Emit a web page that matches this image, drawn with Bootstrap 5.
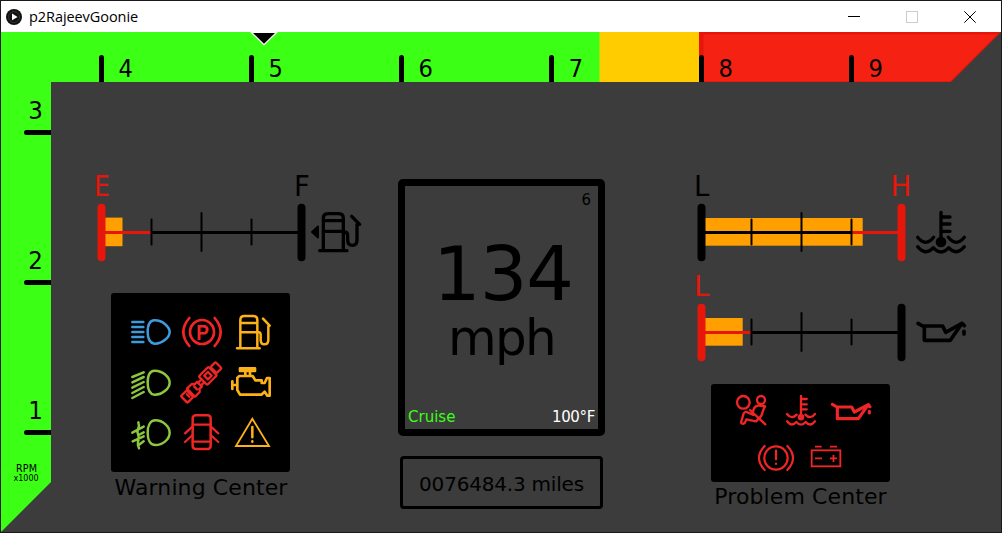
<!DOCTYPE html>
<html lang="en">
<head>
<meta charset="utf-8">
<title>p2RajeevGoonie</title>
<link rel="stylesheet" href="https://cdn.jsdelivr.net/npm/bootstrap@5.3.0/dist/css/bootstrap.min.css">
<style>
  body { background:#3c3c3c; font-family:"DejaVu Sans",sans-serif; color:#000; overflow:hidden; }
  svg { display:block; flex:none; }
  .app-window { width:1002px; height:533px; border:1px solid #1a181a; background:#3c3c3c; }
  .titlebar { height:31px; background:#fff; padding-left:5px; padding-right:25px; }
  .titlebar-name { font:14.5px/20px "Open Sans",sans-serif; letter-spacing:-.07px; margin-left:7px; }
  .win-buttons { gap:46px; }
  .left-col { width:275px; margin-left:40px; padding-top:86px; }
  .center-col { width:207px; margin-left:32px; padding-top:97px; }
  .right-col { width:300px; margin-left:80px; padding-top:86px; }
  .lamp-panel { background:#000; border-radius:3px; width:179px; }
  .lamp-panel svg { fill:none; stroke-width:7.5; stroke-linecap:round; stroke-linejoin:round; }
  .warning-panel { height:179px; margin:24.5px 0 0 20.4px; padding:14.5px 14.6px 0; display:grid; grid-template-columns:repeat(3,50px); grid-auto-rows:50px; }
  .problem-panel { height:98px; margin:15.5px 0 0 26.4px; padding-top:2.5px; }
  .panel-caption { width:190px; font-size:22px; line-height:24px; text-align:center; white-space:nowrap; letter-spacing:.1px; }
  .speed-box { height:257px; border:7px solid #000; border-radius:5px; padding:5px 3px 3px; }
  .small-read { font-size:15px; line-height:18px; }
  .temp-read { letter-spacing:-.35px; }
  .speed-value { font-size:75px; line-height:75px; margin-top:28px; padding-left:3px; letter-spacing:-1px; }
  .speed-unit { font-size:50px; line-height:50px; margin-top:1px; letter-spacing:-1.7px; }
  .odometer { height:53px; border:3px solid #000; border-radius:4px; width:203px; margin:20px 0 0 2px; padding-top:3px; font-size:20px; letter-spacing:-.2px; }
  .c-green { color:#3bff14; }
  .s-red { stroke:#f02525; } .s-blue { stroke:#3f9bdc; } .s-green { stroke:#8dc63f; } .s-amber { stroke:#fcb117; }
  .tick { stroke:#000; stroke-width:5; stroke-linecap:round; }
  .num { font-size:25px; }
  .end-label { font-size:27.5px; }
  .gauge-end { stroke-width:8; stroke-linecap:round; }
  .gauge-line { stroke-width:3; }
  .gauge-tick { stroke:#000; stroke-width:2; stroke-linecap:round; }
  .gauge-icon { fill:none; stroke:#000; stroke-width:10; stroke-linecap:round; stroke-linejoin:round; }
</style>
</head>
<body>
<div class="app-window d-flex flex-column">
  <header class="titlebar d-flex align-items-center">
    <svg width="16" height="16" viewBox="0 0 16 16"><circle cx="8" cy="8" r="8" fill="#111"/><circle cx="8" cy="8" r="5.5" fill="none" stroke="#333"/><path d="M6 4.6 11.6 8 6 11.2z" fill="#fff"/></svg>
    <span class="titlebar-name">p2RajeevGoonie</span>
    <div class="win-buttons d-flex ms-auto">
      <svg width="12" height="12"><path d="M0 5.5H12" stroke="#000"/></svg>
      <svg width="12" height="12"><rect x=".5" y=".5" width="11" height="11" fill="none" stroke="#ccc"/></svg>
      <svg width="12" height="12"><path d="M.3.3 11.7 11.7M11.7.3.3 11.7" stroke="#000"/></svg>
    </div>
  </header>

  <!-- RPM scale, upper part -->
  <svg width="1000" height="50">
    <path d="M0 0H599V50H0z" fill="#3bff14"/>
    <path d="M598.500 0H699V50H598.500z" fill="#fc0"/>
    <path d="M698 0H1000L950 50H698z" fill="#e6160a"/>
    <path d="M702.5 2.5H996L949 49.2H702.5z" fill="#f52214"/>
    <path d="M249 0H277L263 13.5z" fill="#fff"/><path d="M252 1H274L263 11.7z"/>
    <g class="tick"><path d="M100.5 25.5V56M250.5 25.5V56M400.5 25.5V56M550.5 25.5V56M700.5 25.5V56M850.5 25.5V56"/></g>
    <g class="num"><text x="117.5" y="45" textLength="14.4" lengthAdjust="spacingAndGlyphs">4</text><text x="267.5" y="45" textLength="14.4" lengthAdjust="spacingAndGlyphs">5</text><text x="417.5" y="45" textLength="14.4" lengthAdjust="spacingAndGlyphs">6</text><text x="567.8" y="45" textLength="14.4" lengthAdjust="spacingAndGlyphs">7</text><text x="717.5" y="45" textLength="14.4" lengthAdjust="spacingAndGlyphs">8</text><text x="867.5" y="45" textLength="14.4" lengthAdjust="spacingAndGlyphs">9</text></g>
  </svg>

  <div class="d-flex flex-grow-1">
    <!-- RPM scale, lower part -->
    <svg width="50" height="450" viewBox="0 50 50 450">
      <path d="M0 50H50V450L0 500z" fill="#3bff14"/>
      <path class="tick" d="M25.5 100.5H56M25.5 250.5H56M25.5 400.5H56"/>
      <g class="num"><text x="27.3" y="87" textLength="14.6" lengthAdjust="spacingAndGlyphs">3</text><text x="27.3" y="237" textLength="14.6" lengthAdjust="spacingAndGlyphs">2</text><text x="27.3" y="387" textLength="14.6" lengthAdjust="spacingAndGlyphs">1</text></g>
      <text x="15" y="440" font-size="9.6" textLength="21">RPM</text>
      <text x="12.6" y="449" font-size="8" textLength="25">x1000</text>
    </svg>

    <section class="left-col">
      <svg width="275" height="100" viewBox="91 168 275 100">
        <rect x="102" y="217.6" width="20.5" height="28.6" fill="#ffa000"/>
        <path class="gauge-line" d="M101 232.5H301" stroke="#000"/>
        <path class="gauge-tick" d="M151.5 219.5V244.5M201.5 213V251M251.5 219.5V244.5"/>
        <path class="gauge-line" d="M101 232.5H150.5" stroke="#e6160a"/>
        <path class="gauge-end" d="M101.5 207.7V257.3" stroke="#e6160a"/>
        <path class="gauge-end" d="M301.5 207.7V257.3" stroke="#000"/>
        <text class="end-label" x="94" y="196" fill="#e6160a" textLength="15.8" lengthAdjust="spacingAndGlyphs">E</text><text class="end-label" x="294" y="196">F</text>
        <path d="M312 232 318 226.5V237.5z" stroke="#000" stroke-width="2" stroke-linejoin="round"/>
        <g class="gauge-icon" transform="translate(80 165) scale(.33333)">
          <path d="M719 257H801M730 255V160Q730 146 744 146H776Q790 146 790 160V255M732 167H788M732 199H788M790 201H795Q803 202 803 212V225Q803 241 817 241Q831 241 831 225V178M815 154 839 178"/>
        </g>
      </svg>
      <div class="lamp-panel warning-panel">
        <svg class="s-blue" viewBox="0 0 150 150"><path d="M19 45H52M19 60H52M19 75H52M19 90H52M19 105H52M85 40C110 39 131 60 131 75C131 90 110 111 85 110C70 108 65 95 65 75C65 55 70 41 85 40z"/></svg>
        <svg class="s-red" viewBox="0 0 150 150"><circle cx="78" cy="75" r="36" stroke-width="8"/><path stroke-width="8" d="M40 33Q4 75 40 117M116 33Q152 75 116 117"/><text x="61" y="98" font-family="Liberation Sans" font-weight="700" font-size="64" textLength="38" lengthAdjust="spacingAndGlyphs" fill="#f02525" stroke="none">P</text></svg>
        <svg class="s-amber" viewBox="0 0 150 150"><path d="M33 124H101M43 124V39Q43 27 55 27H82Q94 27 94 39V124M43 48H94M43 76H98Q104 76 104 84V98Q104 112 115 112Q127 112 127 98V58M111 35 131 56"/></svg>
        <svg class="s-green" viewBox="0 0 150 150"><path d="M19 60 53 46M19 76 53 60M19 92 53 75M19 108 53 90M19 123 53 105M85 41C110 40 131 61 131 77C131 93 110 114 85 113C70 111 65 97 65 77C65 57 70 42 85 41z"/></svg>
        <svg class="s-red" viewBox="0 0 150 150"><g transform="translate(76 76) rotate(-45)" stroke-width="7"><rect x="52" y="-13" width="21" height="26" rx="3"/><rect x="7" y="-18" width="41" height="36" rx="3"/><rect x="20" y="-8" width="16" height="16"/><path d="M7-6H-8M7 6H-8M-8-10V10M-8-10H-18L-24-17H-44V17H-24L-18 10H-8M-24-6V6"/><rect x="-73" y="-14" width="25" height="28" rx="3"/><path d="M-56-5V5"/></g></svg>
        <svg class="s-amber" viewBox="0 0 150 150"><path stroke-width="8" d="M42 34H87V42H42zM58 44V56M72 44V56M34 62 40 57H80L88 70H107V78H116L123 63H131V116H124L116 104 106 113H42L34 99zM19 73V96M20 84H33"/></svg>
        <svg class="s-green" viewBox="0 0 150 150"><path d="M88 40C112 40 131 60 131 77C131 97 110 114 88 114C72 114 65 97 65 77C65 57 72 40 88 40zM37 46Q41 56 36 66Q32 76 37 86Q41 95 36 104Q34 112 39 124M19 77 53 59M38 84 53 76M20 103 53 88M38 114 53 103"/></svg>
        <svg class="s-red" viewBox="0 0 150 150"><rect x="50" y="25" width="54" height="101" rx="9"/><path stroke-width="6.5" d="M50 53H104M50 104H104M50 58 27 79M50 84 27 105M104 58 127 79M104 84 127 105"/></svg>
        <svg class="s-amber" viewBox="0 0 150 150"><path stroke-width="5.5" stroke-linejoin="miter" d="M79 35 129 117H30z"/><path d="M79 60V91M79 103V104"/></svg>
      </div>
      <div class="panel-caption" style="margin:4px 0 0 15px">Warning Center</div>
    </section>

    <section class="center-col">
      <div class="speed-box d-flex flex-column">
        <div class="small-read text-end pe-1">6</div>
        <div class="speed-value text-center">134</div>
        <div class="speed-unit text-center">mph</div>
        <div class="small-read d-flex justify-content-between mt-auto"><span class="c-green">Cruise</span><span class="text-white temp-read">100°F</span></div>
      </div>
      <div class="odometer d-flex align-items-center justify-content-center">0076484.3 miles</div>
    </section>

    <section class="right-col">
      <svg width="300" height="100" viewBox="685 168 300 100">
        <rect x="702" y="218" width="160.7" height="27.7" fill="#ffa000"/>
        <path class="gauge-line" d="M701 232.5H852" stroke="#000"/>
        <path class="gauge-line" d="M852 232.5H901" stroke="#e6160a"/>
        <path class="gauge-tick" d="M751.5 219.5V244.5M801.5 213V251M851.5 219.5V244.5"/>
        <path class="gauge-end" d="M701.5 207.7V257.3" stroke="#000"/>
        <path class="gauge-end" d="M901.5 207.7V257.3" stroke="#e6160a"/>
        <text class="end-label" x="694" y="196">L</text><text class="end-label" x="890.5" y="196" fill="#e6160a">H</text>
        <g class="gauge-icon" transform="translate(680 165) scale(.33333)">
          <circle cx="783" cy="231" r="11" fill="#000"/>
          <path d="M783 142V225M785 156H810M785 177H810M785 199H810M713 217Q737 247 761 217M805 217Q829 247 853 217M713 245Q737 274 760 248Q783 274 806 248Q829 274 853 245"/>
        </g>
      </svg>
      <svg width="300" height="100" viewBox="685 268 300 100">
        <rect x="702" y="318" width="40.7" height="27.7" fill="#ffa000"/>
        <path class="gauge-line" d="M701 332.5H901" stroke="#000"/>
        <path class="gauge-tick" d="M751.5 319.5V344.5M801.5 313V351M851.5 319.5V344.5"/>
        <path class="gauge-line" d="M701 332.5H750.5" stroke="#e6160a"/>
        <path class="gauge-end" d="M701.5 307.7V357.3" stroke="#e6160a"/>
        <path class="gauge-end" d="M901.5 307.7V357.3" stroke="#000"/>
        <text class="end-label" x="694" y="296" fill="#e6160a">L</text>
        <g class="gauge-icon" transform="translate(680 270) scale(.33333)">
          <path stroke-width="11" d="M714 160 733 171M733 168H788L797 187 846 160 811 211H733zM846 160 853 167M852 184V192"/>
        </g>
      </svg>
      <div class="lamp-panel problem-panel">
        <div class="d-flex justify-content-center">
          <svg class="s-red" width="50" height="48" viewBox="0 0 150 144"><circle cx="52" cy="49" r="19" stroke-width="7"/><circle cx="105" cy="42" r="12" stroke-width="7"/><path stroke-width="7" d="M72 72 118 115M117 61Q103 58 95 59Q86 61 83 70L80 80M117 61Q112 70 110 78Q107 92 98 98L90 106 61 100 57 110Q50 117 45 110L53 82Q58 75 65 79L82 87"/></svg>
          <svg class="s-red" width="50" height="48" viewBox="0 0 150 144"><circle cx="75" cy="94" r="6" fill="#f02525"/><path stroke-width="7" d="M75 30V90M76 39H92M76 55H92M76 70H92M33 84Q47 102 62 86M88 86Q103 102 117 84M33 106Q47 124 61 108Q75 124 89 108Q103 124 117 106"/></svg>
          <svg class="s-red" width="50" height="48" viewBox="0 0 150 144"><path stroke-width="9.5" d="M19 55 33 63M34 63H77L85 78 127 56 97 98H34zM127 56 132 62M130 76V81"/></svg>
        </div>
        <div class="d-flex justify-content-center">
          <svg class="s-red" width="50" height="48" viewBox="0 0 150 144"><circle cx="75" cy="72" r="35" stroke-width="6.5"/><path stroke-width="6.5" d="M41 36Q7 72 41 108M109 36Q143 72 109 108M75 50V76M75 89V90"/></svg>
          <svg class="s-red" width="50" height="48" viewBox="0 0 150 144"><g stroke-width="5.5" stroke-linecap="butt" stroke-linejoin="miter"><rect x="32" y="49" width="86" height="48"/><path d="M42 38H62M87 38H108M42 73H63M87 73H108M97.500 63V84"/></g></svg>
        </div>
      </div>
      <div class="panel-caption" style="margin:3px 0 0 20.5px">Problem Center</div>
    </section>
  </div>
</div>
<script src="https://cdn.jsdelivr.net/npm/bootstrap@5.3.0/dist/js/bootstrap.bundle.min.js"></script>
</body>
</html>
